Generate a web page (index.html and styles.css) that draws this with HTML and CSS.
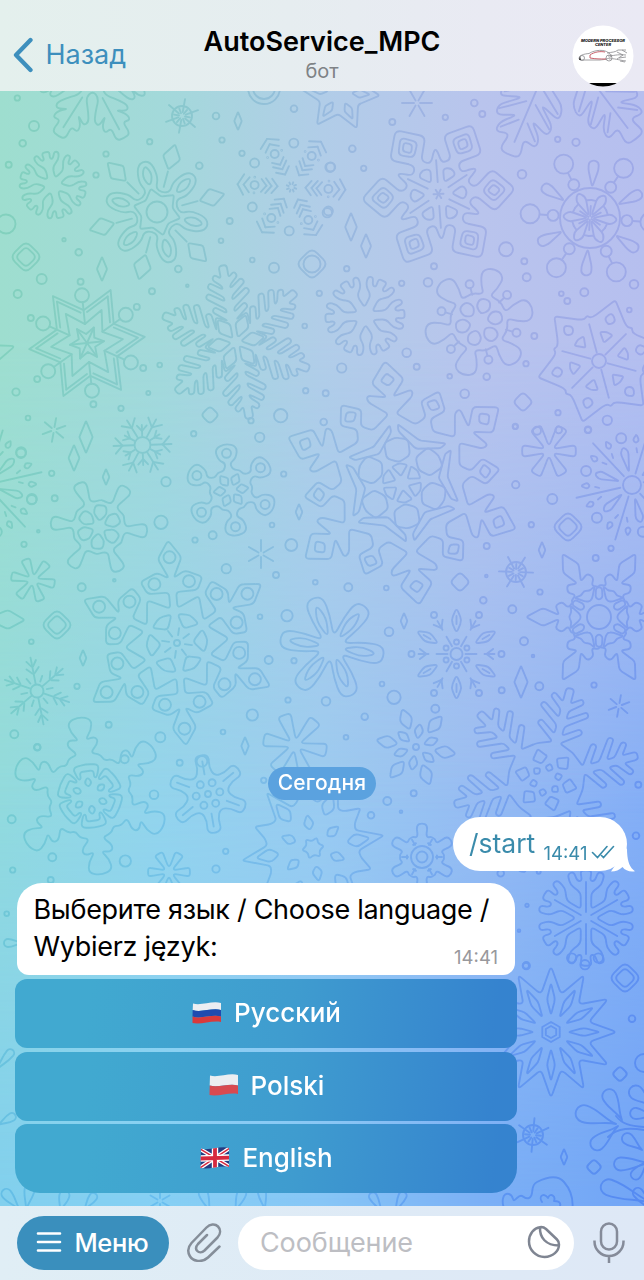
FILE: index.html
```html
<!DOCTYPE html>
<html lang="ru">
<head>
<meta charset="utf-8">
<title>AutoService_MPC</title>
<link rel="stylesheet" href="styles.css">
</head>
<body>
<div class="app">
  <header class="header">
    <a class="back">
      <svg width="20" height="36" viewBox="0 0 20 36"><path d="M17.500 3 3 18l14.500 15" fill="none" stroke="#3d8fbd" stroke-width="4.300" stroke-linecap="round" stroke-linejoin="round"/></svg>
      <span class="back-label">Назад</span>
    </a>
    <div class="titles">
      <div class="title">AutoService_MPC</div>
      <div class="subtitle">бот</div>
    </div>
    <svg class="avatar" width="62" height="62" viewBox="0 0 62 62">
      <defs><clipPath id="av"><circle cx="31" cy="31" r="30.500"/></clipPath></defs>
      <g clip-path="url(#av)">
        <rect width="62" height="62" fill="#fff"/>
        <rect y="58" width="62" height="5" fill="#000"/>
        <text x="31" y="17" class="avatar-text" textLength="44" lengthAdjust="spacingAndGlyphs">MODERN PROCESSOR</text>
        <text x="31" y="20.500" class="avatar-text" textLength="16" lengthAdjust="spacingAndGlyphs">CENTER</text>
        <g fill="none" stroke="#8a8a8e" stroke-width=".8">
          <path d="M7 34c0-4 5-5 10-5.500 6-4 16-4 19-1l4 3c-3 4-8 4-12 4.500L9 35z"/>
          <path d="M35 28c5-1 8-.5 11-3h8M36 31c6 0 8-2 18-1M37 34c5-1 9 1 17 2M45 27l6 3-6 4M50 25l5 3M47 33l7-1M48 36l5 1"/>
          <circle cx="10" cy="33" r="2.500"/><circle cx="37" cy="33" r="3"/>
        </g>
        <path d="M18 30c4-3 10-4 15-3M18 30v3c6 1 10 1 16 1" fill="none" stroke="#c2505c" stroke-width=".9"/>
        <path d="M7 35l1-4 1 4z" fill="#333"/>
      </g>
    </svg>
  </header>

  <main class="chat">
    <svg class="wallpaper" id="wallpaper" viewBox="0 91 644 1115" width="644" height="1115"></svg>
    <div class="date"><span>Сегодня</span></div>
    <div class="bubble out">
      <span class="command">/start</span>
      <span class="time out-time">14:41</span>
      <svg class="checks" width="24" height="14" viewBox="0 0 24 14"><path d="M1.500 7.500 6.500 12.500 16 1.500M10.500 10.500l2 2 10-11" fill="none" stroke="#3a8bab" stroke-width="1.600" stroke-linecap="round"/></svg>
      <svg class="tail" width="24" height="24" viewBox="-2 0 24 24"><path d="M14 0C14 12 16 19 22 23.300 17 24.300 12 22.500 9.500 19 6 22 3 23.500-2 23.500L7 10z" fill="#fff"/></svg>
    </div>
    <div class="bubble in">
      <div class="text">Выберите язык / Choose language /<br>Wybierz język:</div>
      <span class="time in-time">14:41</span>
    </div>
    <div class="keyboard">
      <div class="key">
        <svg class="flag" width="30" height="22" viewBox="0 0 30 22">
          <path d="M1 1.500c8 2.500 19-3 28-.5v7C20 5.500 9 11 .7 8z" fill="#eceef2"/>
          <path d="M.7 8C9 11 20 5.500 29 8v6.500C20 12 9 17.500.5 14.500z" fill="#1f4bb0"/>
          <path d="M.5 14.500c8.500 3 19.500-2.500 28.500 0V20c-9-2-20 3-28.500 1z" fill="#d93a3c"/>
        </svg>
        <span>Русский</span>
      </div>
      <div class="key">
        <svg class="flag" width="30" height="22" viewBox="0 0 30 22">
          <path d="M1 1.500c8 2.500 19-3 28-.5v10.500C20 9 9 14 .7 11.500z" fill="#eceef1"/>
          <path d="M.7 11.500C9 14 20 9 29 11.500V20c-9-2-20 3-28.500 1z" fill="#d84a50"/>
        </svg>
        <span>Polski</span>
      </div>
      <div class="key">
        <svg class="flag" width="30" height="22" viewBox="0 0 30 22">
          <defs><clipPath id="uk"><path d="M1 1.500c8 2.500 19-3 28-.5v19c-9-2-20 3-28.500 1z"/></clipPath></defs>
          <g clip-path="url(#uk)">
            <rect width="30" height="22" fill="#243c82"/>
            <path d="M0 2l30 18M0 21 30 1" stroke="#fff" stroke-width="4"/>
            <path d="M0 2l30 18M0 21 30 1" stroke="#d6293f" stroke-width="1.500"/>
            <path d="M15 0v22M0 11.500 30 10.500" stroke="#fff" stroke-width="6.400"/>
            <path d="M15 0v22M0 11.500 30 10.500" stroke="#d6293f" stroke-width="3.800"/>
          </g>
        </svg>
        <span>English</span>
      </div>
    </div>
  </main>

  <footer class="composer">
    <div class="menu">
      <svg width="26" height="22" viewBox="0 0 26 22"><path d="M2 2.500h22M2 11h22M2 19.500h22" stroke="#fff" stroke-width="2.600" stroke-linecap="round"/></svg>
      <span>Меню</span>
    </div>
    <svg class="clip" width="36" height="40" viewBox="0 0 36 40"><path d="M33.500 24.500 22 35.500C16 41 7 39.500 3.800 34 1.500 30 2 25 5.500 21L20.500 5.500C24 2 29 1.500 32 4.500s2.500 7.500-.5 11L18.500 28.500c-2.500 2.300-5.500 2.300-7.200.5s-1.500-4.500.7-7L21 13" fill="none" stroke="#858e99" stroke-width="2.500" stroke-linecap="round" stroke-linejoin="round"/></svg>
    <div class="field">
      <span class="placeholder">Сообщение</span>
      <svg width="34" height="34" viewBox="0 0 34 34"><path d="M13 2.200C7 3 2 9 2 16.500 2 25 9 32 17.500 32S32 26 32 19.500c0-2-.5-3.500-2-5L19 4c-1.800-1.600-4-2.100-6-1.800zM13 2.500c-.5 10 6 18 18.700 18" fill="none" stroke="#7f8592" stroke-width="2.500" stroke-linejoin="round"/></svg>
    </div>
    <svg class="mic" width="32" height="42" viewBox="0 0 32 42"><rect x="8" y="1.500" width="16" height="26" rx="8" fill="none" stroke="#858b99" stroke-width="2.500"/><path d="M1.500 18.500v1a14.500 14.500 0 0 0 29 0v-1M16 34v7" fill="none" stroke="#858b99" stroke-width="2.500"/></svg>
  </footer>
</div>
<script src="wallpaper.js"></script>
</body>
</html>
```

FILE: styles.css
```css
* { box-sizing: border-box; }
body { margin: 0; font-family: Inter, "Liberation Sans", sans-serif; }
.app { display: flex; flex-direction: column; width: 644px; height: 1280px; overflow: hidden; }

.header {
  display: grid; grid-template-columns: 160px 1fr 160px; height: 91px;
  padding: 0 10px 0 10px;
  background: linear-gradient(90deg, #e4f0ed, #e6edf0 45%, #e9eaf3 75%, #eae9f4);
}
.back { display: flex; gap: 13px; padding: 37px 0 0 2.500px; height: 75px; }
.back-label { color: #3d8fbd; font-size: 27px; line-height: 36px; letter-spacing: 0; white-space: nowrap; }
.titles { text-align: center; padding-top: 26px; white-space: nowrap; }
.title { font-size: 27px; line-height: 32px; font-weight: 600; color: #000; }
.subtitle { font-size: 20px; line-height: 26px; color: #7e8286; }
.avatar { justify-self: end; margin-top: 24.500px; }
.avatar-text { font-size: 4px; font-weight: 800; font-style: italic; text-anchor: middle; fill: #111; }

.chat {
  flex: 1; position: relative; isolation: isolate;
  display: flex; flex-direction: column; justify-content: flex-end; padding: 0 0 13px;
  background: linear-gradient(90deg, #82d0ee, #86d0f4 25%, #87c6f6 50%, #7bb0f6 75%, #72a5f6);
}
.chat::before, .chat::after { content: ""; position: absolute; inset: 0; z-index: -2; }
.chat::before {
  background: linear-gradient(90deg, #93dbdc, #94d4ec 25%, #9bcbf0 50%, #98bcf2 75%, #85aff6);
  mask-image: linear-gradient(180deg, #000 60%, transparent 100%);
}
.chat::after {
  background: linear-gradient(90deg, #9edecf, #a3d9da 25%, #b1cde8 50%, #b9c4ed 75%, #b6bfef);
  mask-image: linear-gradient(180deg, #000 22%, rgba(0,0,0,.55) 42%, transparent 65%);
}
.wallpaper {
  position: absolute; inset: 0; z-index: -1; opacity: .46; mix-blend-mode: soft-light;
  fill: none; stroke: #000; stroke-width: 1.900; stroke-linecap: round; stroke-linejoin: round;
}

.date { display: flex; justify-content: center; margin-bottom: 17px; }
.date span {
  display: block; width: 108px; height: 33px; border-radius: 17px; background: #5ba2df;
  color: #fff; font-size: 21px; font-weight: 500; line-height: 32px; letter-spacing: .2px; text-align: center; white-space: nowrap;
}
.bubble { background: #fff; position: relative; }
.out {
  display: flex; align-self: flex-end; width: 174px; height: 54px; margin: 0 17px 12px 0;
  padding-left: 16px; border-radius: 27px; color: #3a8bab;
}
.command { width: 74.500px; font-size: 26.500px; line-height: 53px; white-space: nowrap; }
.time { font-size: 18.500px; line-height: 20px; white-space: nowrap; }
.out-time { padding-top: 26px; width: 47px; }
.checks { margin-top: 28px; }
.tail { position: absolute; right: -8px; bottom: -0.500px; }
.in {
  display: flex; justify-content: space-between; width: 498.500px; height: 92px; margin: 0 0 4px 16.500px;
  padding: 7.500px 17px 0; border-radius: 25px 25px 12px 12px; color: #000;
}
.text { font-size: 27px; line-height: 37px; letter-spacing: -0.300px; white-space: nowrap; width: 416px; }
.in-time { color: #98989c; padding-top: 56px; }

.keyboard { display: flex; flex-direction: column; gap: 3.500px; margin-left: 15px; width: 502px; }
.key {
  display: flex; align-items: center; justify-content: center; gap: 12px; height: 69px; padding: 0 0 2px 1px; border-radius: 12px;
  background: linear-gradient(98deg, #41a9d0 15%, #3f9ccf 55%, #3583cf 95%);
  color: #fff; font-size: 26px; font-weight: 500; white-space: nowrap;
}
.key:last-child { border-radius: 12px 12px 25px 25px; }
.flag { display: block; }

.composer {
  display: flex; align-items: flex-start; height: 74px; padding: 10px 0 0 16.500px;
  background: linear-gradient(90deg, #e0eef5, #deeaf6 60%, #dee8f6);
}
.menu {
  display: flex; align-items: center; gap: 13px; width: 152px; height: 54px; padding: 0 0 2px 19px;
  border-radius: 27px; background: #3a8fbd; color: #fff; font-size: 25.500px; font-weight: 500; letter-spacing: -0.400px;
}
.clip { margin: 6px 0 0 17px; }
.field {
  display: flex; align-items: center; justify-content: space-between; width: 336px; height: 54px;
  margin-left: 16.500px; padding: 0 13px 2px 22px; border-radius: 27px; background: #fff;
}
.placeholder { color: #bdbec3; font-size: 27px; letter-spacing: -0.100px; white-space: nowrap; }
.mic { margin: 6px 0 0 18.500px; }
```

FILE: wallpaper.js
```js
(function () {
  const out = [];
  const D = Math.PI / 180;
  const f = v => v.toFixed(1);
  const circle = (x, y, r) => out.push(`<circle cx="${f(x)}" cy="${f(y)}" r="${r}"/>`);

  // Polygon with rounded corners
  function poly(p, r) {
    let d = '';
    const n = p.length;
    for (let i = 0; i < n; i++) {
      const a = p[(i + n - 1) % n], b = p[i], c = p[(i + 1) % n];
      const la = Math.hypot(a[0] - b[0], a[1] - b[1]) || 1, lc = Math.hypot(c[0] - b[0], c[1] - b[1]) || 1;
      const ta = Math.min(r, la / 2) / la, tc = Math.min(r, lc / 2) / lc;
      d += `${i ? 'L' : 'M'}${f(b[0] + (a[0] - b[0]) * ta)} ${f(b[1] + (a[1] - b[1]) * ta)}Q${f(b[0])} ${f(b[1])} ${f(b[0] + (c[0] - b[0]) * tc)} ${f(b[1] + (c[1] - b[1]) * tc)}`;
    }
    out.push(`<path d="${d}Z"/>`);
  }
  const pairs = a => { const q = []; for (let i = 0; i < a.length; i += 2) q.push([a[i], a[i + 1]]); return q; };

  // ops use polar pairs: degrees from the arm axis, radius
  //  o: outline round the whole flake, half an arm from tip to valley
  //  k: closed shape mirrored on the arm axis; m: mirrored line; l: plain line; c: circle
  function flake(cx, cy, n, rot, ops) {
    const at = (a, r) => [cx + Math.sin(a * D) * r, cy - Math.cos(a * D) * r];
    for (const op of ops) {
      const [t, off, rd, ...v] = op;
      if (t === 'r') { circle(cx, cy, off); continue; }
      const all = [];
      for (let i = 0; i < n; i++) {
        const ax = rot + off + i * 360 / n, q = pairs(v);
        if (t === 'o') {
          for (let j = q.length - 1; j > 0; j--) all.push(at(ax - q[j][0], q[j][1]));
          for (const p of q) if (p[0] < 180 / n) all.push(at(ax + p[0], p[1]));
        } else if (t === 'k') {
          const a = q.map(p => at(ax + p[0], p[1]));
          const b = q.filter(p => p[0]).reverse().map(p => at(ax - p[0], p[1]));
          poly(a.concat(b), rd);
        } else if (t === 'c') {
          q.forEach(p => { const s = at(ax + p[0], p[1]); circle(s[0], s[1], rd); });
        } else {
          for (const s of t === 'm' ? [1, -1] : [1])
            out.push('<path d="M' + q.map(p => at(ax + s * p[0], p[1]).map(f).join(' ')).join('L') + '"/>');
        }
      }
      if (t === 'o') poly(all, rd);
    }
  }
  // fir-like flake: prongs [base, length] leave each arm at 60 degrees
  function comb(cx, cy, rot, w, tip, inner, prongs) {
    const v = [], c = (x, y) => v.push(Math.atan2(x, y) / D, Math.hypot(x, y));
    c(0, tip + 1); c(w, tip);
    for (const [b, l] of prongs) {
      const x = w + l * .87, y = b + l * .5;
      c(w, b + w); c(x - 1, y + w + 1); c(x + 2, y + w * .1); c(w, b - w);
    }
    v.push(30, inner);
    flake(cx, cy, 6, rot, [['o', 0, 3, ...v]]);
  }
  const star = (x, y, r, rot, n = 6) => flake(x, y, n, rot, [['l', 0, 0, 0, 3, 0, r]]);
  const gem = (x, y, h) => poly([[x, y - h], [x + h * .42, y], [x, y + h], [x - h * .42, y]], 1);
  const tile = (x, y, h) => poly([[x, y - h], [x + h, y], [x, y + h], [x - h, y]], h * .45);
  const wheel = (x, y, rot) => flake(x, y, 6, rot, [['r', 10], ['l', 0, 0, 0, 4, 0, 17], ['l', 30, 0, 0, 3, 0, 8]]);
  const bloom = (x, y, r, rot) => flake(x, y, 6, rot, [['o', 0, 5, 0, r, 12, r, 13, r * .78, 30, r * .16]]);
  const coral = (x, y, r, rot) => {
    flake(x, y, 6, rot, [['o', 0, 4, 0, r * 1.02, 7, r * 1.01, 6, r * .8, 13, r * .8, 15, r * 1.02, 23, r * 1.01, 25, r * .78, 12, r * .55, 30, r * .22]]);
  };
  const leaf = (x, y, s, rot) => flake(x, y, 6, rot, [
    ['o', 0, 7 * s, 0, 71 * s, 7, 70 * s, 7, 55 * s, 15, 59 * s, 17, 51 * s, 8, 40 * s, 20, 50 * s, 26, 46 * s, 24, 36 * s, 10, 20 * s, 30, 12 * s],
    ['l', 0, 0, 0, 22 * s, 0, 60 * s]]);
  // rounded petal growing from its base at (x, y)
  const drop = (x, y, a, len, w) => {
    const h = w / 2, k = len - h;
    out.push(`<path transform="translate(${x} ${y}) rotate(${a})" d="M0 0C-1 ${-len * .3} ${-h} ${-len * .5} ${-h} ${-k}A${h} ${h} 0 0 1 ${h} ${-k}C${h} ${-len * .5} 1 ${-len * .3} 0 0Z"/>`);
  };

  leaf(93, 80, .93, 32);
  flake(559, 37, 6, 23, [
    ['o', 0, 7, 0, 128, 5, 127, 4, 108, 11, 114, 12, 104, 5, 88, 16, 100, 19, 91, 8, 70, 23, 84, 26, 70, 12, 50, 30, 28],
    ['l', 0, 0, 0, 50, 0, 114], ['m', 0, 0, 4, 72, 17, 93], ['m', 0, 0, 3, 92, 10, 107], ['m', 0, 0, 6, 55, 22, 77]]);
  wheel(182, 116, 10); wheel(516, 572, 32); wheel(533, 1135, 5);
  coral(53, 185, 33, -13); coral(365, 316, 39, 27);
  coral(586, 918, 47, 0);
  flake(586, 918, 6, 0, [['l', 0, 0, 0, 6, 0, 36]]);

  flake(157, 212, 6, -15, [['r', 10.5],
    ['o', 0, 8, 0, 53, 9, 49, 17, 34, 12, 24, 30, 20],
    ['k', 0, 6, 0, 26, 8, 38, 0, 49],
    ['o', 0, 2, 0, 24, 30, 16],
    ['k', 30, 2, 0, 44, 9, 57, 0, 70], ['l', 30, 0, 0, 26, 0, 42]]);
  star(291.5, 187, 5, 20, 8);
  flake(291.5, 187, 6, 3, [['c', 0, 4.5, 0, 44],
    ['m', 30, 0, 0, 14, 20, 21], ['m', 30, 0, 0, 20, 16, 27], ['m', 30, 0, 0, 25, 12, 31],
    ['c', 30, 4, 0, 37], ['m', 30, 0, 0, 48, 10, 43], ['m', 30, 0, 0, 54, 12, 49], ['c', 30, .4, 12, 38, -12, 38]]);
  flake(438.5, 194, 6, 26, [
    ['o', 0, 6, 0, 77, 21, 59, 6, 37, 20, 31, 27, 42, 30, 45],
    ['k', 0, 5, 0, 44, 12, 56, 0, 68], ['k', 0, 3, 0, 49, 6, 56, 0, 62],
    ['k', 0, 4, 0, 13, 16, 26, 0, 29], ['l', 30, 0, 0, 12, 0, 34], ['l', 0, 0, 0, 1, 0, 5]]);
  flake(590, 218, 6, 4, [['r', 30],
    ['k', 0, 3, 0, 31, 6, 49, 5, 56, 0, 58],
    ['c', 30, 5.5, 0, 37], ['c', 30, 9.5, 0, 60], ['l', 30, 0, 0, 43, 0, 50],
    ['k', 30, 4, 0, 2, 14, 22, 0, 28], ['m', 0, 0, 0, 18, 14, 18], ['l', 0, 0, 0, 2, 0, 12]]);
  flake(87, 343, 6, 24, [['o', 0, 0, 0, 58, 30, 33],
    ['m', 0, 0, 0, 51, 24, 31], ['o', 0, 0, 0, 36, 30, 19], ['o', 0, 0, 0, 17, 30, 9],
    ['l', 0, 0, 0, 0, 0, 17], ['l', 30, 0, 0, 19, 0, 41], ['c', 30, 7, 0, 48], ['c', 30, 3, 0, 61.5]]);
  comb(236, 342, -10, 4, 77, 32, [[61, 8], [50, 15], [38, 19], [26, 14]]);
  flake(236, 342, 6, 20, [['k', 0, 3, 0, 5, 22, 19, 0, 29]]);
  flake(479, 322, 6, 16, [
    ['o', 0, 8, 0, 56, 13, 52, 13, 38, 6, 28, 30, 30],
    ['c', 30, 4, 0, 39], ['l', 30, 0, 0, 28, 0, 35], ['k', 0, 4, 0, 8, 26, 16, 14, 23, 0, 24]]);
  flake(599, 361, 6, 15, [['r', 7],
    ['o', 0, 3, 0, 63, 19, 46, 26, 44, 30, 47], ['l', 30, 0, 0, 9, 0, 38],
    ['k', 0, 4, 0, 37, 8, 43, 0, 50], ['k', 0, 2, 0, 19, 13, 29, 0, 30]]);

  flake(402, 483, 6, -8, [
    ['o', 0, 4, 0, 123, 9, 104, 2, 87, 14, 94, 15, 88, 3, 70, 21, 60, 28, 70, 21, 84, 30, 99],
    ['k', 0, 3, 0, 98, 4, 104, 0, 111], ['k', 30, 3, 0, 78, 5, 84, 0, 90],
    ['k', 30, 2, 0, 37, 26, 52, 26, 59, 0, 46],
    ['k', 0, 4, 0, 21, 24, 29, 16, 44, 0, 46], ['k', 0, 2, 0, 7, 24, 19, 0, 20]]);
  bloom(549, 451, 27, 30); bloom(33, 580, 22, -20); bloom(295, 745, 32, -20); bloom(169, 872, 21, 30);
  const burst = (x, y) => flake(x, y, 6, -13, [['r', 9],
    ['k', 0, 3, 0, 13, 7, 34, 0, 39], ['c', 0, 5, 0, 48], ['l', 30, 0, 0, 12, 0, 57],
    ['k', 42, 2, 0, 42, 4, 45, 0, 51], ['k', 18, 2, 0, 42, 4, 45, 0, 51], ['m', 30, 0, 8, 33, 10, 37]]);
  burst(632, 485); burst(-14, 485);
  flake(142.5, 445, 6, 28, [['r', 8], ['l', 0, 0, 0, 9, 0, 29], ['m', 0, 0, 0, 20, 16, 28], ['l', 30, 0, 0, 9, 0, 20], ['m', 30, 0, 0, 14, 14, 20]]);
  flake(99, 527, 6, 35, [['o', 0, 6, 0, 49, 9, 47, 8, 36, 5, 26, 28, 27, 30, 27], ['k', 30, 3, 0, 6, 26, 15, 14, 22, 0, 22]]);
  flake(231, 490, 6, -7, [['o', 0, 8, 0, 47, 15, 44, 16, 32, 4, 27, 14, 20, 30, 22], ['c', 0, 4.5, 0, 37], ['k', 30, 2, 0, 5, 24, 12, 0, 18]]);
  [[57, 625], [26, 257], [568, 527], [625, 978]].forEach(p => { tile(p[0], p[1], 16); tile(p[0], p[1], 10.5); });
  tile(312, 264, 16); circle(312, 264, 8.5);
  flake(177, 643, 6, -5, [
    ['o', 0, 4, 0, 103, 8, 86, 2, 65, 11, 73, 26, 71, 26, 57, 4, 51, 6, 35, 30, 52],
    ['c', 0, 6, 0, 86], ['c', 0, 6, 16, 63, -16, 63], ['k', 30, 4, 0, 16, 24, 29, 0, 31]]);
  circle(177, 643, 3); flake(177, 643, 8, 8, [['l', 0, 0, 0, 8, 0, 15]]);
  flake(332, 647, 6, -21, [['o', 0, 10, 0, 53, 11, 50, 17, 32, 30, 10], ['k', 0, 8, 0, 10, 10, 30, 0, 46]]);
  flake(456.5, 654, 6, 0, [['r', 6], ['k', 0, 4, 0, 21, 9, 34, 0, 46], ['l', 0, 0, 0, 30, 0, 38],
    ['c', 30, 3, 0, 45], ['l', 30, 0, 0, 28, 0, 38], ['m', 30, 0, 0, 30, 8, 37], ['l', 30, 0, 0, 9, 0, 20], ['c', 0, 2.5, 0, 12]]);
  flake(599, 617, 6, 30, [['r', 12],
    ['o', 0, 3, 0, 73, 9, 57, 3, 40, 15, 45, 22, 40, 17, 32, 30, 32, 30, 30],
    ['k', 0, 2, 0, 18, 10, 20, 22, 31, 10, 28, 0, 30], ['k', 30, 2, 0, 17, 10, 20, 6, 29, 0, 30]]);
  flake(37, 691, 6, -11, [['r', 6.5], ['l', 0, 0, 0, 7, 0, 34], ['m', 0, 0, 2, 25, 9, 31], ['m', 0, 0, 4, 18, 15, 24], ['l', 30, 0, 0, 10, 0, 16]]);
  flake(90, 796, 6, -8, [
    ['o', 0, 9, 0, 80, 9, 77, 9, 66, 3, 56, 13, 60, 17, 54, 8, 43, 22, 43, 30, 38],
    ['k', 0, 5, 0, 32, 24, 33, 28, 20, 20, 19, 16, 26, 0, 25], ['k', 0, 3, 0, 9, 16, 14, 0, 19]]);
  flake(208, 794, 6, -10, [['o', 0, 6, 0, 40, 11, 38, 12, 27, 30, 19], ['l', 0, 0, 0, 20, 0, 33], ['c', 30, 3.5, 0, 12], ['r', 3]]);
  flake(416, 747, 6, -20, [['r', 3], ['k', 0, 4, 0, 18, 13, 30, 0, 41], ['k', 30, 3, 0, 8, 16, 17, 0, 24]]);
  comb(546, 780, 15, 4, 94, 38, [[76, 13], [60, 22], [43, 20]]);
  flake(546, 780, 6, 15, [['k', 30, 2, 0, 17, 18, 24, 0, 32], ['k', 0, 2, 0, 9, 18, 13, 0, 17]]);
  flake(313, 848, 6, 20, [['o', 0, 3, 0, 72, 13, 46, 20, 48, 30, 62], ['o', 0, 2, 0, 11, 30, 7],
    ['k', 0, 4, 0, 34, 9, 44, 0, 58], ['k', 30, 3, 0, 18, 12, 25, 0, 34]]);
  flake(422, 857, 6, 0, [['r', 5.5], ['r', 11], ['o', 0, 5, 0, 34, 10, 32, 12, 20, 24, 22, 26, 22], ['m', 0, 0, 24, 15, 34, 15], ['l', 30, 0, 0, 14, 0, 20]]);
  flake(551, 1032, 12, 0, [['o', 0, 5, 0, 66, 15, 39], ['k', 0, 3, 0, 17, 7, 33, 0, 49]]);
  flake(551, 1032, 6, 0, [['o', 0, 0, 0, 10, 30, 8.7], ['o', 0, 0, 0, 6, 30, 5.2]]);
  flake(340, 92, 6, 35, [['o', 0, 3, 0, 40, 30, 22], ['k', 0, 2, 0, 12, 12, 20, 0, 30]]);

  // ferns in the lower right corner
  drop(616, 1124, -72, 42, 17); drop(622, 1120, -28, 34, 14); drop(618, 1126, -130, 34, 14);
  drop(650, 1163, -92, 36, 13); drop(642, 1150, -52, 24, 11); drop(648, 1160, -140, 24, 10);
  drop(652, 1106, -50, 28, 14); drop(654, 1116, -82, 24, 11); drop(652, 1203, -70, 54, 16); drop(654, 1212, -40, 30, 10);
  circle(644, 1063, 9);
  out.push('<path d="M616 1116c6 8 14 10 28 11M608 1137c10-10 24-9 36-7"/>');
  out.push('<path d="M506 1212c-6-10-3-20 3-18s2 10 8 4 6 2 12 0 0-12 8-16 20-8 27 0 10 18 8 30M542 1202c-4-6 2-10 6-4 2-6 8-2 6 3 8 0 8 6 2 8"/>');
  drop(20, 1210, -40, 26, 10); drop(26, 1210, 10, 26, 10); drop(60, 1212, 15, 22, 10); drop(84, 1210, 35, 20, 8);
  drop(210, 1212, -20, 24, 9); drop(235, 1212, 20, 24, 9); drop(265, 1210, -10, 22, 8); drop(382, 1212, -30, 22, 8); drop(395, 1212, 25, 22, 8);
  drop(22, 943, -90, 18, 8); drop(-4, 1070, 40, 26, 8); drop(-2, 1125, 60, 20, 8);
  star(160, 1201, 11, 0);

  star(417, 103, 15, 30); star(54, 430, 12, 10); star(261, 554, 14, 0); star(619, 706, 11, 10);
  circle(264, 88, 16); circle(264, 88, 11); circle(6, 224, 9.5);
  poly([[-12, 345], [15, 346], [-8, 366]], 4); poly([[-14, 619], [8, 610], [25, 620], [8, 629]], 3);
  [[238, 121, 9], [102, 269, 12], [351, 227, 14], [366, 246, 12], [86, 437, 16], [74, 458, 13], [106, 477, 8],
    [83, 658, 8], [245, 746, 9], [542, 550, 8], [521, 682, 16], [404, 621, 8], [299, 512, 8], [564, 1157, 8]].forEach(a => gem(...a));
  [[523, 402, 10], [460, 582, 10], [210, 415, 9], [620, 1074, 8], [594, 1167, 8]].forEach(a => tile(...a));

  // snow dots, on a grid three times finer than the page: x, y, radius
  function dots(ox, oy, v) {
    for (let i = 0; i < v.length; i += 3) circle(ox + v[i] / 3, oy + v[i + 1] / 3, v[i + 2] / 3);
  }
  dots(0, 90, [52, 24, 8, 102, 108, 15, 68, 160, 10, 26, 224, 9, 318, 192, 8, 288, 255, 8, 449, 155, 8, 648, 78, 10, 666, 150, 8, 726, 190, 8, 598, 227, 10,
    882, 56, 10, 689, 393, 9, 663, 452, 7, 236, 487, 10, 125, 567, 15, 53, 612, 12, 192, 449, 5, 535, 537, 10, 456, 604, 9, 562, 587, 4, 757, 510, 7,
    822, 533, 15, 914, 708, 7, 479, 825, 7, 445, 909, 6, 363, 955, 8, 48, 906, 11, 84, 984, 7, 842, 977, 20, 917, 902, 8, 958, 610, 8]);
  dots(322, 90, [211, 96, 9, 370, 82, 8, 457, 39, 10, 481, 72, 9, 91, 176, 10, 125, 235, 8, 24, 232, 14, 16, 368, 14, 707, 148, 8, 762, 157, 11,
    600, 253, 13, 552, 478, 21, 607, 514, 9, 614, 562, 12, 336, 529, 9, 318, 577, 13, 239, 580, 8, 74, 536, 8, 936, 583, 13, 787, 607, 12, 718, 611, 7,
    736, 633, 9, 922, 660, 7, 637, 738, 9, 612, 821, 8, 494, 860, 10, 428, 911, 13, 383, 859, 7, 254, 788, 13, 284, 830, 9, 59, 834, 14, 11, 910, 9,
    708, 968, 8, 856, 991, 14, 580, 1010, 7, 5, 996, 10, 710, 1020, 10, 798, 1020, 9, 645, 1022, 12]);
  dots(0, 420, [63, 100, 14, 155, 160, 8, 95, 239, 14, 164, 235, 9, 72, 373, 8, 115, 334, 4, 245, 502, 12, 343, 481, 4, 498, 185, 14, 483, 307, 20, 638, 346, 12,
    585, 360, 8, 679, 446, 14, 828, 465, 9, 874, 375, 18, 816, 315, 7, 851, 162, 8, 779, 52, 14, 581, 41, 8, 861, 587, 17, 780, 590, 7, 946, 487, 7, 806, 720, 12,
    882, 722, 8, 864, 840, 8, 757, 885, 17, 669, 936, 7, 481, 952, 15, 326, 914, 9, 231, 799, 8, 94, 665, 7, 43, 943, 12, 112, 982, 9, 753, 2, 8, 606, 1024, 16, 374, 1018, 12]);
  dots(322, 420, [580, 19, 8, 798, 29, 10, 581, 194, 11, 691, 237, 15, 628, 314, 8, 494, 378, 9, 493, 468, 4, 654, 516, 8, 484, 541, 10, 571, 568, 12, 606, 664, 12,
    867, 385, 8, 821, 414, 9, 79, 502, 12, 193, 504, 7, 201, 635, 13, 180, 792, 7, 216, 832, 20, 128, 890, 10, 72, 952, 7, 340, 866, 12, 539, 811, 9, 652, 799, 12,
    633, 708, 4, 816, 795, 8, 12, 844, 13]);
  dots(0, 740, [35, 238, 12, 38, 390, 8, 157, 352, 12, 376, 363, 17, 152, 420, 9, 20, 521, 7, 462, 164, 13, 539, 68, 9, 677, 334, 8, 648, 387, 11, 791, 121, 8, 112, 22, 10]);
  dots(322, 740, [196, 183, 12, 275, 160, 9, 237, 215, 4, 147, 226, 10, 949, 134, 9, 942, 287, 10, 615, 496, 5, 591, 572, 4, 613, 677, 11, 536, 400, 10, 650, 395, 6]);
  dots(500, 960, [78, 17, 9, 396, 176, 10, 255, 14, 14, 215, -6, 14, 295, -6, 14]);

  document.getElementById('wallpaper').innerHTML = out.join('');
})();
```
